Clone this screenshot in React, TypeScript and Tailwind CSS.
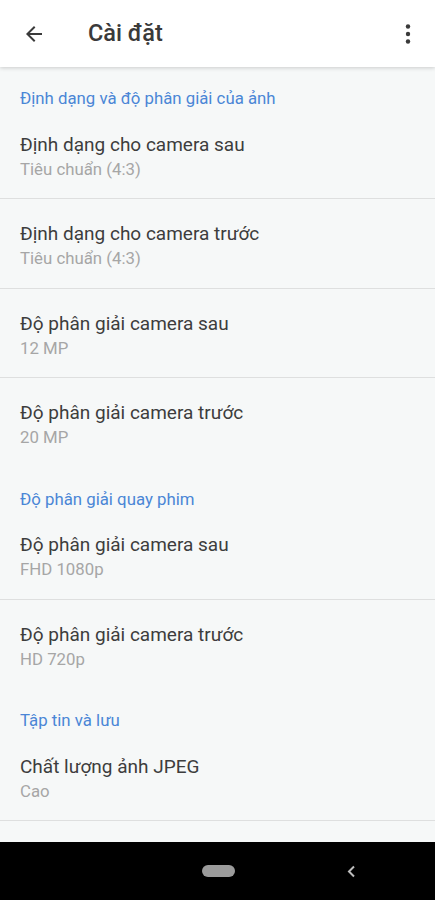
type Item = { title: string; value: string; divider: boolean };
type Section = { header: string; items: Item[] };

const sections: Section[] = [
  {
    header: 'Định dạng và độ phân giải của ảnh',
    items: [
      { title: 'Định dạng cho camera sau', value: 'Tiêu chuẩn (4:3)', divider: true },
      { title: 'Định dạng cho camera trước', value: 'Tiêu chuẩn (4:3)', divider: true },
      { title: 'Độ phân giải camera sau', value: '12 MP', divider: true },
      { title: 'Độ phân giải camera trước', value: '20 MP', divider: false },
    ],
  },
  {
    header: 'Độ phân giải quay phim',
    items: [
      { title: 'Độ phân giải camera sau', value: 'FHD 1080p', divider: true },
      { title: 'Độ phân giải camera trước', value: 'HD 720p', divider: false },
    ],
  },
  {
    header: 'Tập tin và lưu',
    items: [{ title: 'Chất lượng ảnh JPEG', value: 'Cao', divider: true }],
  },
];

function SettingRow({ item }: { item: Item }) {
  return (
    <div
      className={`h-[89.5px] px-5 pt-[21px] ${
        item.divider ? 'border-b border-[#dedfdf]' : ''
      }`}
    >
      <div className="text-[19px] leading-[27px] text-[#3d3d3d]">{item.title}</div>
      <div className="text-[16.8px] leading-[22px] text-[#a6a6a6]">{item.value}</div>
    </div>
  );
}

export default function App() {
  return (
    <div
      className="relative flex h-[900px] w-[435px] flex-col overflow-hidden bg-[#f6f8f8]"
      style={{ fontFamily: 'Roboto, "Noto Sans", sans-serif' }}
    >
      <header className="relative z-10 flex h-[67px] shrink-0 items-center bg-white shadow-[0_1px_4px_rgba(0,0,0,0.18)]">
        <button className="flex h-full w-[68px] items-center pl-[22px] text-[#3a3a3a]">
          <svg width="24" height="24" viewBox="0 0 24 24" fill="currentColor">
            <path d="M20 11H7.83l5.59-5.59L12 4l-8 8 8 8 1.41-1.41L7.83 13H20v-2z" />
          </svg>
        </button>
        <h1 className="ml-5 flex-1 text-[23.5px] font-medium text-[#3a3a3a]">Cài đặt</h1>
        <button className="flex h-full w-[52px] items-center justify-center pr-[2px] text-[#3a3a3a]">
          <svg width="24" height="24" viewBox="0 0 24 24" fill="currentColor">
            <circle cx="12" cy="4.5" r="2.2" />
            <circle cx="12" cy="12" r="2.2" />
            <circle cx="12" cy="19.5" r="2.2" />
          </svg>
        </button>
      </header>

      <main className="flex-1 overflow-hidden">
        {sections.map((section) => (
          <section key={section.header}>
            <div className="h-[42.5px] px-5 pt-[21px] text-[16.8px] leading-[20px] text-[#4a86d6]">
              {section.header}
            </div>
            {section.items.map((item, i) => (
              <SettingRow key={i} item={item} />
            ))}
          </section>
        ))}
      </main>

      <nav className="absolute bottom-0 left-0 flex h-[58px] w-full items-center bg-black">
        <div className="flex flex-1 justify-center pl-[1px]">
          <div className="h-[12px] w-[33px] rounded-full bg-[#9b9b9b]" />
        </div>
        <div className="absolute left-[346px] top-[23px] text-[#bdbdbd]">
          <svg width="10" height="13" viewBox="0 0 10 13" fill="none" stroke="currentColor" strokeWidth="2">
            <path d="M8 1.5 L3 6.5 L8 11.5" />
          </svg>
        </div>
      </nav>
    </div>
  );
}
